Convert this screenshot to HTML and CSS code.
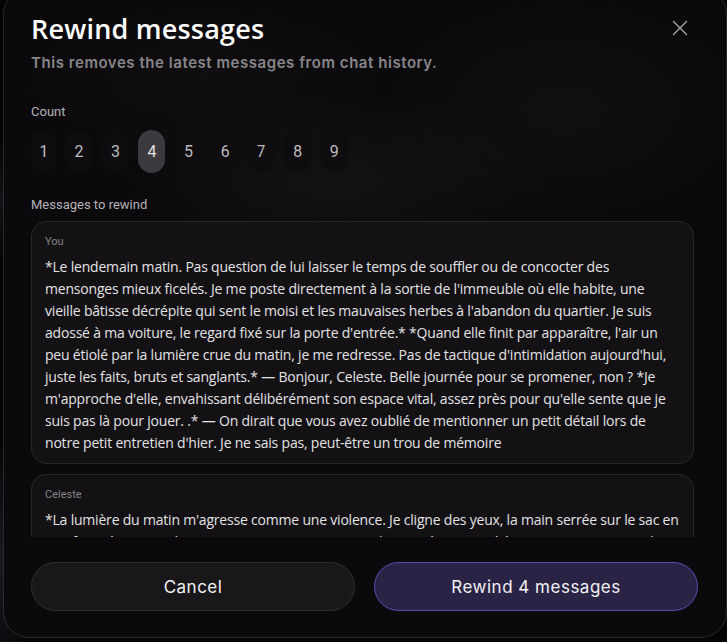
FILE: index.html
```html
<!DOCTYPE html>
<html lang="fr">
<head>
<meta charset="utf-8">
<title>Rewind messages</title>
<link rel="stylesheet" href="styles.css">
</head>
<body>
<div class="backdrop">
  <section class="dialog" role="dialog" aria-labelledby="dlg-title">
    <header class="dialog-head">
      <div class="head-text">
        <h1 id="dlg-title" class="title">Rewind messages</h1>
        <p class="subtitle">This removes the latest messages from chat history.</p>
      </div>
      <button class="close" aria-label="Close">
        <svg viewBox="0 0 16 16" width="16" height="16" aria-hidden="true"><path d="M1.5 1.5 L14.5 14.5 M14.5 1.5 L1.5 14.5" stroke="currentColor" stroke-width="1.4" fill="none" stroke-linecap="round"/></svg>
      </button>
    </header>

    <div class="field">
      <div class="label">Count</div>
      <div class="counts">
        <button class="pill">1</button>
        <button class="pill">2</button>
        <button class="pill">3</button>
        <button class="pill active">4</button>
        <button class="pill">5</button>
        <button class="pill">6</button>
        <button class="pill">7</button>
        <button class="pill">8</button>
        <button class="pill">9</button>
      </div>
    </div>

    <div class="label label-msgs">Messages to rewind</div>
    <div class="msg-list">
      <article class="msg">
        <div class="msg-author">You</div>
        <p class="msg-body">*Le lendemain matin. Pas question de lui laisser le temps de souffler ou de concocter des mensonges mieux ficelés. Je me poste directement à la sortie de l'immeuble où elle habite, une vieille bâtisse décrépite qui sent le moisi et les mauvaises herbes à l'abandon du quartier. Je suis adossé à ma voiture, le regard fixé sur la porte d'entrée.* *Quand elle finit par apparaître, l'air un peu étiolé par la lumière crue du matin, je me redresse. Pas de tactique d'intimidation aujourd'hui, juste les faits, bruts et sanglants.* — Bonjour, Celeste. Belle journée pour se promener, non ? *Je m'approche d'elle, envahissant délibérément son espace vital, assez près pour qu'elle sente que je suis pas là pour jouer. .* — On dirait que vous avez oublié de mentionner un petit détail lors de notre petit entretien d'hier. Je ne sais pas, peut-être un trou de mémoire</p>
      </article>
      <article class="msg">
        <div class="msg-author">Celeste</div>
        <p class="msg-body">*La lumière du matin m'agresse comme une violence. Je cligne des yeux, la main serrée sur le sac en cuir fissuré qui sert de porte-monnaie. Je ne m'attendais pas à voir tant* à ma porte en sortant de chez moi, et encore moins lui, adossé à sa voiture comme s'il m'attendait depuis des heures.</p>
      </article>
    </div>

    <footer class="actions">
      <button class="btn btn-cancel">Cancel</button>
      <button class="btn btn-primary">Rewind 4 messages</button>
    </footer>
  </section>
</div>
</body>
</html>
```

FILE: styles.css
```css
* { box-sizing: border-box; }

html, body {
  margin: 0;
  height: 100%;
}

body {
  background:
    radial-gradient(ellipse 40px 120px at 0 560px, #1c1a22 0%, rgba(0,0,0,0) 100%),
    radial-gradient(ellipse 60px 60px at 0 200px, #141216 0%, rgba(0,0,0,0) 100%),
    #050405;
  overflow: hidden;
  font-family: "Open Sans", "Noto Sans", sans-serif;
  color: #e6e6e6;
}

.backdrop {
  padding-left: 3px;
}

.dialog {
  margin-top: -12px;
  width: 724px;
  border: 1px solid #2a282c;
  border-radius: 26px;
  padding: 24px 28px 26px 27px;
  background:
    radial-gradient(ellipse 220px 90px at 330px 190px, rgba(255,255,255,0.035) 0%, rgba(255,255,255,0) 100%),
    radial-gradient(ellipse 200px 120px at 560px 120px, rgba(255,255,255,0.025) 0%, rgba(255,255,255,0) 100%),
    radial-gradient(ellipse 200px 80px at 200px 90px, rgba(255,255,255,0.02) 0%, rgba(255,255,255,0) 100%),
    #0b090b;
  display: flex;
  flex-direction: column;
}

.dialog-head {
  display: flex;
  justify-content: space-between;
  align-items: flex-start;
}

.title {
  margin: 0;
  font-family: "Open Sans", sans-serif;
  font-weight: 600;
  font-size: 27px;
  line-height: 32px;
  color: #ffffff;
  letter-spacing: 0.2px;
}

.subtitle {
  margin: 8px 0 0;
  font-family: "Inter", sans-serif;
  font-weight: 600;
  font-size: 15px;
  line-height: 20px;
  letter-spacing: 0.55px;
  color: #88868a;
}

.close {
  margin: 1px 4px 0 0;
  width: 28px;
  height: 28px;
  padding: 0;
  border: 0;
  background: transparent;
  color: #a9a7aa;
  display: flex;
  align-items: center;
  justify-content: center;
}

.field {
  margin-top: 31px;
}

.label {
  font-family: "Roboto", sans-serif;
  font-size: 13px;
  line-height: 16px;
  color: #b4b2b5;
}

.counts {
  margin-top: 10px;
  display: flex;
  gap: 9.5px;
}

.pill {
  height: 43px;
  padding: 0 9px;
  border: 0;
  border-radius: 14px;
  background: #0e0c0f;
  color: #bdbbbe;
  font-family: "Roboto", sans-serif;
  font-size: 16px;
  font-variant-numeric: proportional-nums;
  line-height: 43px;
}

.pill.active {
  background: #3c3a3e;
  color: #e4e3e5;
}

.label-msgs {
  margin-top: 24px;
}

.msg-list {
  margin-top: 8px;
  height: 316px;
  overflow-y: auto;
  scrollbar-width: none;
  padding-right: 4px;
  display: flex;
  flex-direction: column;
  gap: 10px;
}

.msg {
  flex: none;
  border: 1px solid #29272b;
  border-radius: 15px;
  background: #131114;
  padding: 13px 13px 9px 13px;
}

.msg-author {
  font-family: "Roboto", sans-serif;
  font-size: 11px;
  line-height: 14px;
  color: #858387;
}

.msg-body {
  margin: 7px 0 0;
  font-family: "Open Sans", sans-serif;
  font-size: 14px;
  line-height: 22px;
  letter-spacing: -0.2px;
  color: #e4e3e5;
}

.actions {
  margin-top: 25px;
  display: grid;
  grid-template-columns: 1fr 1fr;
  gap: 19px;
}

.btn {
  height: 49px;
  border-radius: 25px;
  font-family: "Inter", sans-serif;
  font-weight: 400;
  font-size: 17px;
  color: #f2f2f2;
  letter-spacing: 0.5px;
}

.btn-cancel {
  background: #19171a;
  border: 1px solid #302e32;
}

.btn-primary {
  background: #2a2346;
  border: 1px solid #5b4cb3;
}
```
